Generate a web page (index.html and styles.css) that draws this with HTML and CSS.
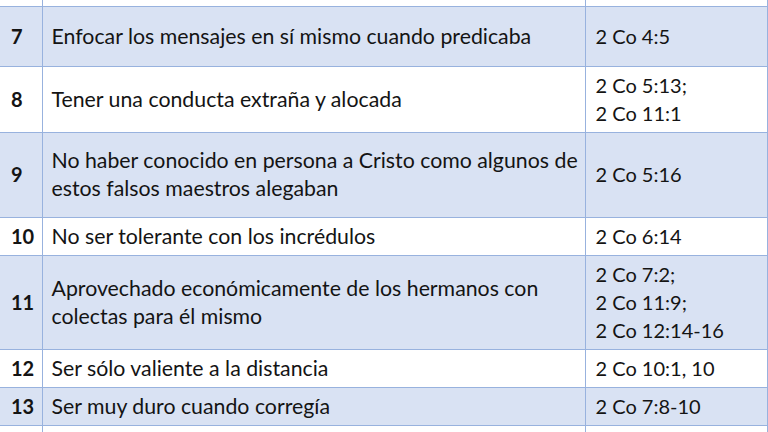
FILE: index.html
```html
<!DOCTYPE html>
<html lang="es">
<head>
<meta charset="utf-8">
<link rel="stylesheet" href="styles.css">
</head>
<body>
<table class="grid">
  <colgroup>
    <col class="c-num">
    <col class="c-text">
    <col class="c-ref">
  </colgroup>
  <tbody>
    <tr class="row plain r-top"><td></td><td></td><td></td></tr>
    <tr class="row shade r7">
      <td class="num">7</td>
      <td class="desc">Enfocar los mensajes en sí mismo cuando predicaba</td>
      <td>2 Co 4:5</td>
    </tr>
    <tr class="row plain r8">
      <td class="num">8</td>
      <td class="desc">Tener una conducta extraña y alocada</td>
      <td>2 Co 5:13;<br>2 Co 11:1</td>
    </tr>
    <tr class="row shade r9">
      <td class="num">9</td>
      <td class="desc">No haber conocido en persona a Cristo como algunos de estos falsos maestros alegaban</td>
      <td>2 Co 5:16</td>
    </tr>
    <tr class="row plain r1">
      <td class="num">10</td>
      <td class="desc">No ser tolerante con los incrédulos</td>
      <td>2 Co 6:14</td>
    </tr>
    <tr class="row shade r11">
      <td class="num">11</td>
      <td class="desc">Aprovechado económicamente de los hermanos con colectas para él mismo</td>
      <td>2 Co 7:2;<br>2 Co 11:9;<br>2 Co 12:14-16</td>
    </tr>
    <tr class="row plain r1">
      <td class="num">12</td>
      <td class="desc">Ser sólo valiente a la distancia</td>
      <td>2 Co 10:1, 10</td>
    </tr>
    <tr class="row shade r1">
      <td class="num">13</td>
      <td class="desc">Ser muy duro cuando corregía</td>
      <td>2 Co 7:8-10</td>
    </tr>
    <tr class="row plain r-end"><td></td><td></td><td></td></tr>
  </tbody>
</table>
</body>
</html>
```

FILE: styles.css
```css
html, body {
  margin: 0;
  padding: 0;
  background: #ffffff;
  overflow: hidden;
}

.grid {
  border-collapse: collapse;
  table-layout: fixed;
  width: 767px;
  font-family: Lato, "Open Sans", sans-serif;
  font-size: 20px;
  line-height: 28px;
  color: #141414;
}

.c-num { width: 42px; }
.c-text { width: 543px; }
.c-ref { width: 182px; }

.grid td {
  border: 1px solid #98b2de;
  padding: 0 10px;
  vertical-align: middle;
  box-sizing: border-box;
}

.grid td:first-child {
  border-left: none;
  padding-left: 11px;
  padding-right: 0;
}

.grid td.desc {
  font-size: 21.3px;
  padding-left: 9px;
  padding-right: 2px;
}

.num {
  font-weight: 700;
}

.shade td { background: #d9e2f3; }
.plain td { background: #ffffff; }

.r-top td { height: 6px; border-top: none; }
.r7 td { height: 60px; }
.r8 td { height: 66px; }
.r9 td { height: 85px; padding-bottom: 2px; }
.r1 td { height: 38px; }
.r11 td { height: 94px; }
.r-end td { height: 20px; }
```
